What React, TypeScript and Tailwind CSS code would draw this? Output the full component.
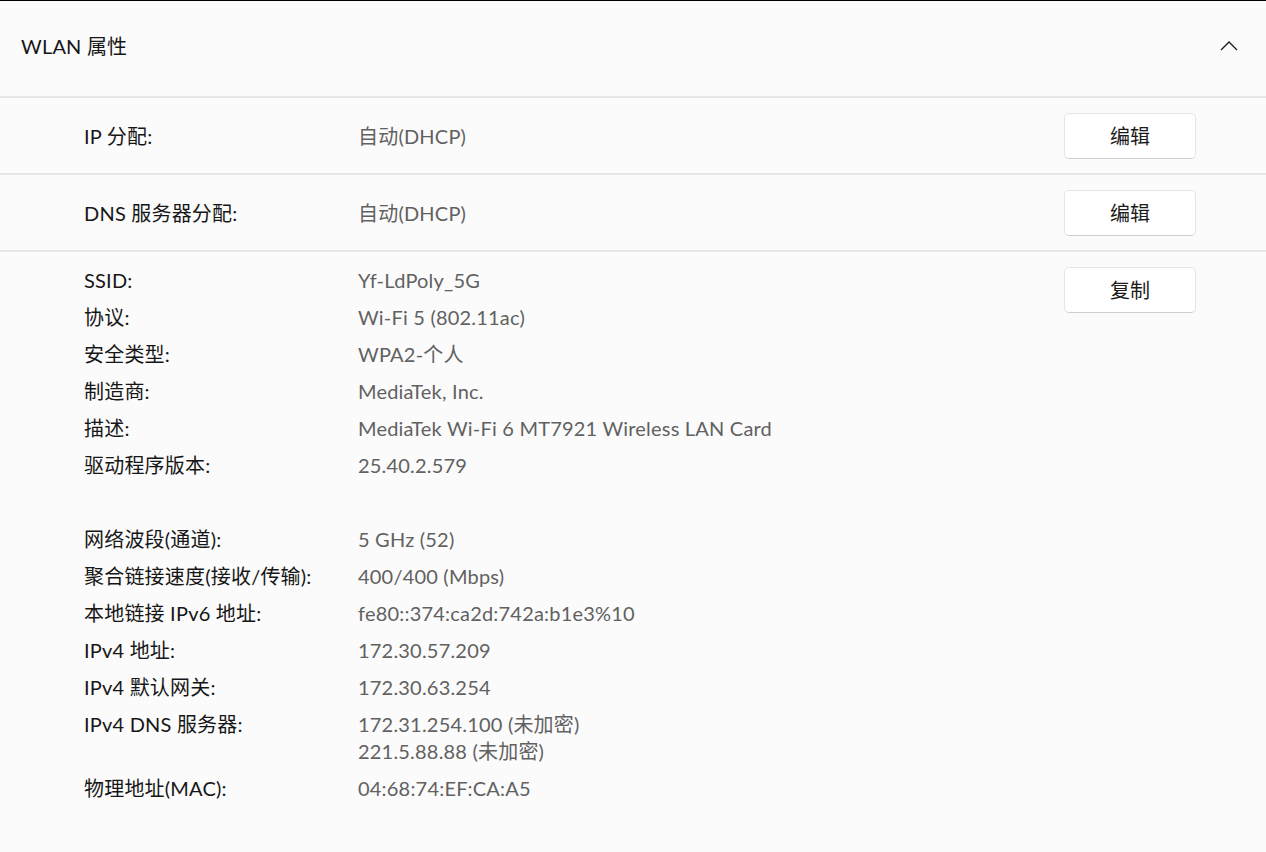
import React from "react";

const font = { fontFamily: '"Lato", "Noto Sans CJK SC", sans-serif' };

function EditButton({ label }: { label: string }) {
  return (
    <button className="w-[132px] h-[46px] rounded-[5px] bg-white border border-[#e5e5e5] border-b-[#cfcfcf] text-[20px] text-[#1b1b1b] tracking-normal">
      {label}
    </button>
  );
}

function SettingRow({ label, value }: { label: string; value: string }) {
  return (
    <div className="flex items-center h-[77px] border-b-2 border-[#e6e6e6] pl-[84px] pr-[70px]">
      <div className="w-[274px] text-[#161616]">{label}</div>
      <div className="flex-1 text-[#616161]">{value}</div>
      <EditButton label="编辑" />
    </div>
  );
}

const details: { label: string; value: string[] }[] = [
  { label: "SSID:", value: ["Yf-LdPoly_5G"] },
  { label: "协议:", value: ["Wi-Fi 5 (802.11ac)"] },
  { label: "安全类型:", value: ["WPA2-个人"] },
  { label: "制造商:", value: ["MediaTek, Inc."] },
  { label: "描述:", value: ["MediaTek Wi-Fi 6 MT7921 Wireless LAN Card"] },
  { label: "驱动程序版本:", value: ["25.40.2.579"] },
  { label: "", value: [""] },
  { label: "网络波段(通道):", value: ["5 GHz (52)"] },
  { label: "聚合链接速度(接收/传输):", value: ["400/400 (Mbps)"] },
  { label: "本地链接 IPv6 地址:", value: ["fe80::374:ca2d:742a:b1e3%10"] },
  { label: "IPv4 地址:", value: ["172.30.57.209"] },
  { label: "IPv4 默认网关:", value: ["172.30.63.254"] },
  { label: "IPv4 DNS 服务器:", value: ["172.31.254.100 (未加密)", "221.5.88.88 (未加密)"] },
  { label: "物理地址(MAC):", value: ["04:68:74:EF:CA:A5"] },
];

export default function App() {
  return (
    <div className="w-[1266px] h-[852px] bg-[#fbfbfb] border-t border-black text-[20px] tracking-[0.2px] overflow-hidden" style={font}>
      <div className="flex items-center justify-between h-[97px] border-b-2 border-[#e6e6e6] pl-[21px] pr-[28px] pb-[5px]">
        <div className="text-[#161616]">WLAN 属性</div>
        <svg width="18" height="10" viewBox="0 0 18 10" fill="none" className="mt-[-1px]">
          <path d="M1 9 L9 1 L17 9" stroke="#1b1b1b" strokeWidth="1.3" />
        </svg>
      </div>
      <SettingRow label="IP 分配:" value="自动(DHCP)" />
      <SettingRow label="DNS 服务器分配:" value="自动(DHCP)" />
      <div className="flex pl-[84px] pr-[70px] pt-[15px]">
        <div className="flex flex-col gap-[10px] flex-1">
          {details.map((d, i) => (
            <div key={i} className="flex leading-[27px] min-h-[27px]">
              <div className="w-[274px] text-[#161616]">{d.label}</div>
              <div className="flex flex-col text-[#616161]">
                {d.value.map((v, j) => (
                  <div key={j}>{v}</div>
                ))}
              </div>
            </div>
          ))}
        </div>
        <EditButton label="复制" />
      </div>
    </div>
  );
}
